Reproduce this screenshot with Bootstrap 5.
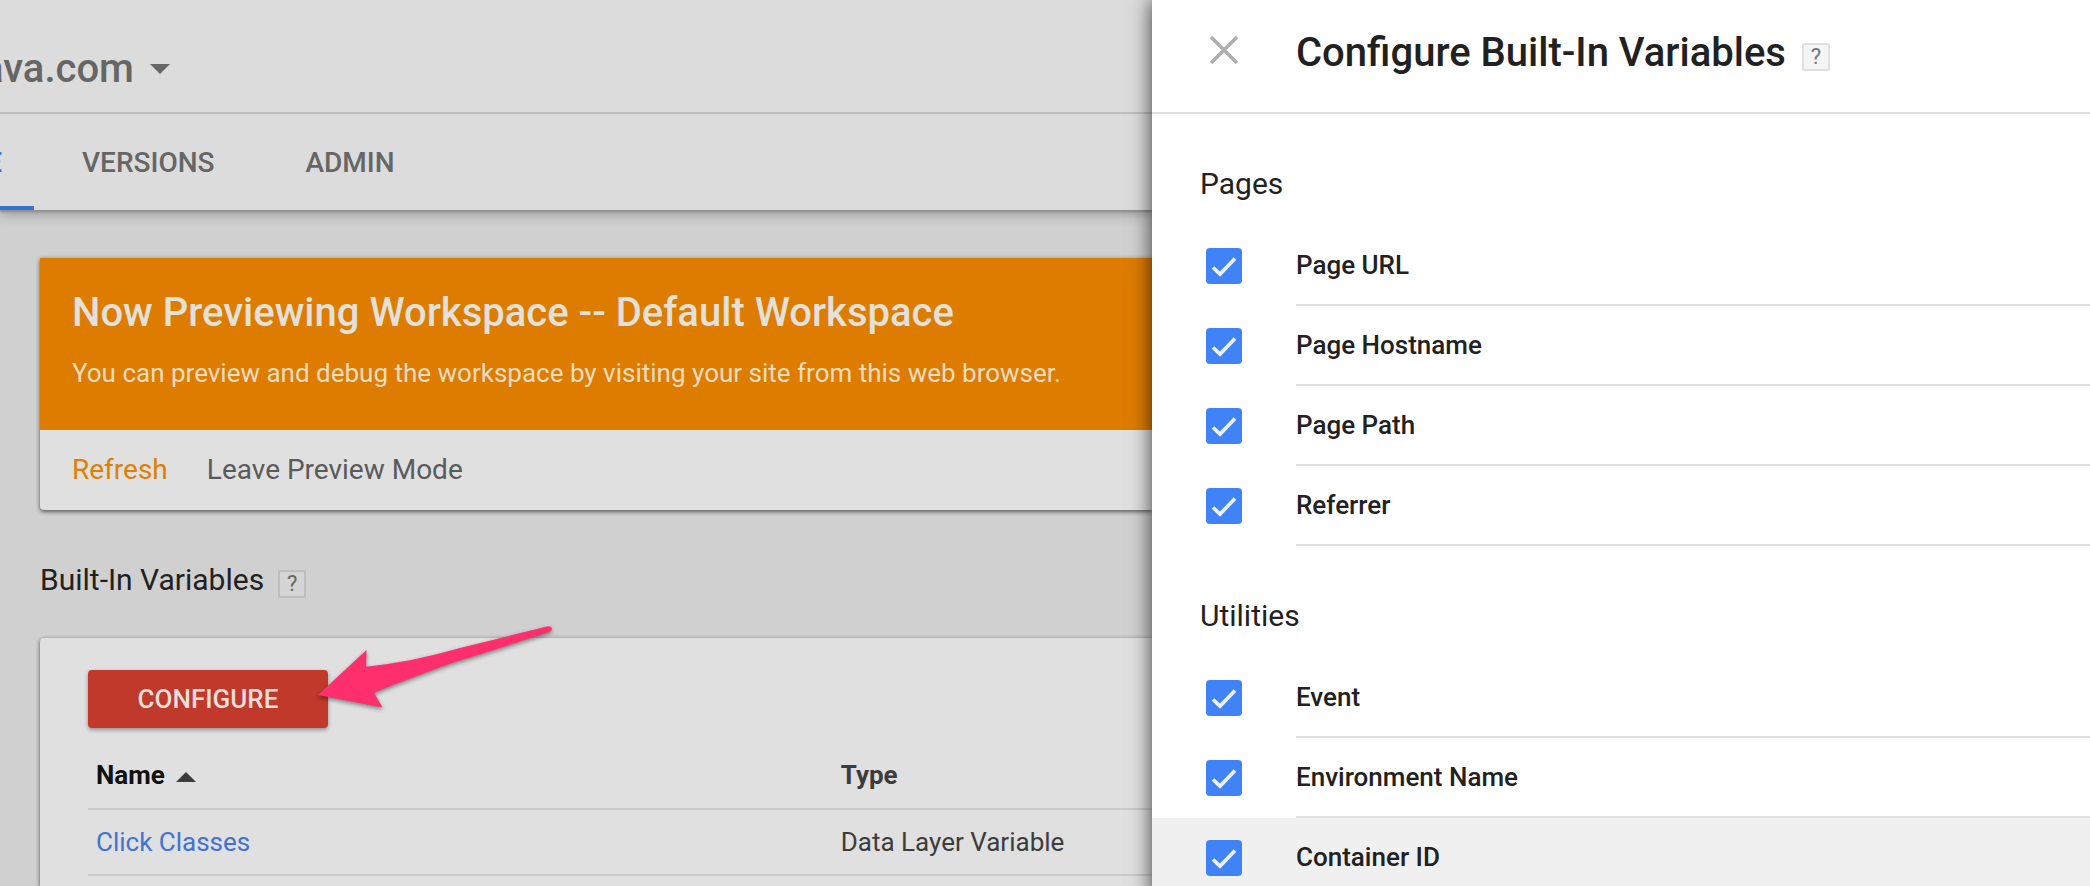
<!DOCTYPE html>
<html lang="en">
<head>
<meta charset="utf-8">
<meta name="viewport" content="width=device-width, initial-scale=1">
<title>Configure Built-In Variables</title>
<link href="https://cdn.jsdelivr.net/npm/bootstrap@5.3.0/dist/css/bootstrap.min.css" rel="stylesheet">
<style>
  body { font-family: Roboto, "Liberation Sans", sans-serif; font-size: 26px; line-height: 32px; color: #212121; background: #d0d0d0; }
  h1, h2, h3, p { margin: 0; }
  a { text-decoration: none; }
  .app-shell { display: grid; grid-template-columns: 1152fr 938fr; }

  /* workspace behind the panel */
  .topbar { padding: 45px 0 19px; border-bottom: 2px solid #bebebe; background: #dcdcdc; }
  .account { margin-left: -18px; gap: 15px; padding: 0; border: 0; background: none; color: #666; font-size: 40px; line-height: 48px; font-weight: 500; }
  .tabbar { height: 96px; background: #dcdcdc; box-shadow: 0 2px 2px #8f8f8f, 0 4px 12px rgba(0,0,0,.28); clip-path: inset(0 0 -20px 0); }
  .tabbar .nav-link { display: flex; align-items: center; height: 100%; padding: 2px 0 0; color: #666; font-size: 28px; font-weight: 500; }
  .tabbar .nav-link.current { width: 34px; justify-content: flex-end; padding-right: 32px; color: #3a70d0; border-bottom: 4px solid #3a70d0; border-top: 4px solid transparent; }
  .tabbar .tab-admin { margin-left: 91px; }
  .page-body { padding: 48px 0 0 40px; }
  .surface { background: #e0e0e0; box-shadow: 0 2px 4px rgba(0,0,0,.5), 0 0 4px rgba(0,0,0,.15); }
  .notice { border-radius: 0 0 0 4px; }
  .notice-text { padding: 31px 32px 41px; background: #de7c00; color: #e4e0da; }
  .notice-text h2 { font-size: 40px; line-height: 48px; font-weight: 500; margin-bottom: 20px; }
  .notice-text p { color: #efdcc0; }
  .notice-actions { height: 80px; padding: 0 32px; gap: 39px; font-size: 28px; }
  .notice-actions a { color: #5a5a5a; }
  .notice-actions a.refresh { color: #dd8005; }
  .section-title { font-size: 30px; line-height: 40px; font-weight: 400; }
  .list-title { margin: 50px 0 38px; gap: 14px; }
  .help { width: 28px; height: 28px; padding: 0; margin-top: 8px; border: 2px solid #bdbdbd; border-radius: 2px; background: #d4d4d4; color: #666; font-size: 22px; line-height: 24px; }
  .variables { min-height: 248px; padding: 32px 0 0 48px; border-radius: 4px 0 0 0; }
  .btn-configure { width: 240px; height: 58px; padding: 0; border: 0; border-radius: 4px; background: #c1392b; color: #f0dedb; font-size: 26px; font-weight: 500; box-shadow: 0 2px 4px rgba(0,0,0,.35); }
  .pointer { left: 226px; top: -48px; pointer-events: none; filter: drop-shadow(0 2px 2px rgba(0,0,0,.45)); }
  .var-table { margin: 14px 0 0; --bs-table-bg: transparent; color: #3c3c3c; table-layout: fixed; }
  .var-table > :not(caption) > * > * { padding: 17px 8px; border-bottom: 2px solid #cacaca; color: #3c3c3c; }
  .var-table > tbody > tr > td { padding: 16px 8px; }
  .var-table > thead > tr > th.sorted { width: 70%; color: #111; }
  .var-table a { color: #4272d2; }

  /* sliding panel */
  .config-panel { min-width: 0; background: #fff; box-shadow: 0 0 20px rgba(0,0,0,.75); }
  .panel-head { height: 114px; padding: 29px 0 35px 56px; border-bottom: 2px solid #e0e0e0; }
  .panel-head h1 { font-size: 40px; line-height: 48px; font-weight: 500; margin-left: 56px; }
  .panel-head .help { margin-left: 16px; border-color: #e0e0e0; background: #f5f5f5; color: #777; }
  .close-panel { width: 32px; height: 32px; padding: 0; border: 0; background: none; margin-bottom: 6px; }
  .group-title { padding: 50px 0 22px 48px; }
  .var-option { height: 80px; padding-left: 54px; gap: 54px; }
  .var-option.hovered { background: #f0f0f0; }
  .var-option .form-check-input { width: 36px; height: 36px; margin: 0; border: 0; border-radius: 4px; background-color: #4083f8; }
  .var-option .form-check-input:checked { background-image: url("data:image/svg+xml,%3csvg xmlns='http://www.w3.org/2000/svg' viewBox='0 0 36 36'%3e%3cpath fill='none' stroke='%23eef2fb' stroke-width='3.6' d='M7 19.5l7 6.6L29 10.4'/%3e%3c/svg%3e"); background-size: 36px 36px; }
  .var-option label { height: 80px; border-bottom: 2px solid #e0e0e0; font-weight: 500; }
</style>
</head>
<body>
<div class="app-shell vh-100 overflow-hidden">
  <main class="d-flex flex-column overflow-hidden">
    <header class="topbar d-flex">
      <button type="button" class="account d-flex align-items-center">ava.com
        <svg width="22" height="12" viewBox="0 0 22 12" aria-hidden="true"><path fill="#666" d="M1 1h20L11 11z"/></svg>
      </button>
    </header>
    <nav class="tabbar nav flex-nowrap position-relative flex-shrink-0">
      <a href="#" class="nav-link current" aria-current="page">E</a>
      <a href="#" class="nav-link ms-5">VERSIONS</a>
      <a href="#" class="nav-link tab-admin">ADMIN</a>
    </nav>
    <div class="page-body">
      <section class="surface notice">
        <div class="notice-text">
          <h2>Now Previewing Workspace -- Default Workspace</h2>
          <p>You can preview and debug the workspace by visiting your site from this web browser.</p>
        </div>
        <div class="notice-actions d-flex align-items-center">
          <a href="#" class="refresh">Refresh</a>
          <a href="#">Leave Preview Mode</a>
        </div>
      </section>
      <div class="list-title d-flex align-items-center">
        <h2 class="section-title">Built-In Variables</h2>
        <button type="button" class="help" aria-label="Help">?</button>
      </div>
      <section class="surface variables">
        <div class="position-relative d-flex">
          <button type="button" class="btn-configure">CONFIGURE</button>
          <svg class="pointer position-absolute" width="244" height="92" viewBox="314 622 244 92" aria-hidden="true">
            <path fill="#ff2f6e" d="M318 695L366.500 650L366 666.700Q412 662 460 648L547 626.500Q551 625.500 552 628.500Q552.500 631 549 632Q500 648 452 663Q410 678 374 692.700L382.500 707.500Z"/>
          </svg>
        </div>
        <table class="table var-table">
          <thead>
            <tr>
              <th scope="col" class="sorted">Name <svg class="ms-1" width="22" height="12" viewBox="0 0 22 12" aria-label="sorted ascending"><path fill="#3c3c3c" d="M1 11h20L11 1z"/></svg></th>
              <th scope="col">Type</th>
            </tr>
          </thead>
          <tbody>
            <tr><td><a href="#">Click Classes</a></td><td>Data Layer Variable</td></tr>
          </tbody>
        </table>
      </section>
    </div>
  </main>

  <aside class="config-panel position-relative">
    <header class="panel-head d-flex align-items-center">
      <button type="button" class="close-panel d-flex align-items-center justify-content-center" aria-label="Close">
        <svg width="32" height="32" viewBox="0 0 32 32" aria-hidden="true"><path stroke="#aeaeae" stroke-width="3.600" d="M3 3l26 26M29 3L3 29"/></svg>
      </button>
      <h1>Configure Built-In Variables</h1>
      <button type="button" class="help" aria-label="Help">?</button>
    </header>
    <section>
      <h2 class="section-title group-title">Pages</h2>
      <div class="var-option d-flex align-items-center"><input class="form-check-input flex-shrink-0" type="checkbox" id="v-url" checked><label for="v-url" class="flex-grow-1 d-flex align-items-center">Page URL</label></div>
      <div class="var-option d-flex align-items-center"><input class="form-check-input flex-shrink-0" type="checkbox" id="v-host" checked><label for="v-host" class="flex-grow-1 d-flex align-items-center">Page Hostname</label></div>
      <div class="var-option d-flex align-items-center"><input class="form-check-input flex-shrink-0" type="checkbox" id="v-path" checked><label for="v-path" class="flex-grow-1 d-flex align-items-center">Page Path</label></div>
      <div class="var-option d-flex align-items-center"><input class="form-check-input flex-shrink-0" type="checkbox" id="v-ref" checked><label for="v-ref" class="flex-grow-1 d-flex align-items-center">Referrer</label></div>
    </section>
    <section>
      <h2 class="section-title group-title">Utilities</h2>
      <div class="var-option d-flex align-items-center"><input class="form-check-input flex-shrink-0" type="checkbox" id="v-event" checked><label for="v-event" class="flex-grow-1 d-flex align-items-center">Event</label></div>
      <div class="var-option d-flex align-items-center"><input class="form-check-input flex-shrink-0" type="checkbox" id="v-env" checked><label for="v-env" class="flex-grow-1 d-flex align-items-center">Environment Name</label></div>
      <div class="var-option hovered d-flex align-items-center"><input class="form-check-input flex-shrink-0" type="checkbox" id="v-cont" checked><label for="v-cont" class="flex-grow-1 d-flex align-items-center">Container ID</label></div>
    </section>
  </aside>
</div>
<script src="https://cdn.jsdelivr.net/npm/bootstrap@5.3.0/dist/js/bootstrap.bundle.min.js"></script>
</body>
</html>
